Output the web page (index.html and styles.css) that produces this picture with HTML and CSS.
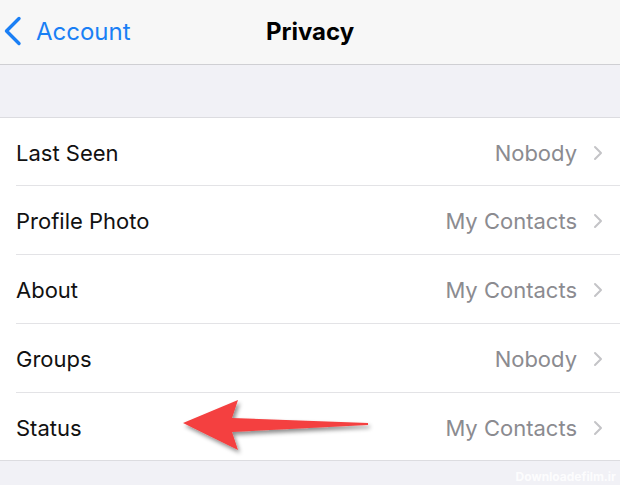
FILE: index.html
```html
<!DOCTYPE html>
<html>
<head>
<meta charset="utf-8">
<link rel="stylesheet" href="styles.css">
</head>
<body>
<div class="screen">
  <header class="nav">
    <div class="back">
      <svg class="back-icon" width="20" height="30" viewBox="0 0 20 30"><path d="M16 2.5 L3.5 15 L16 27.5" fill="none" stroke="#1a7ff5" stroke-width="3.4" stroke-linecap="round" stroke-linejoin="round"/></svg>
      <span>Account</span>
    </div>
    <div class="title">Privacy</div>
  </header>
  <div class="band"></div>
  <ul class="list">
    <li class="row"><span class="label">Last Seen</span><span class="value">Nobody</span><svg class="chev" width="10" height="16" viewBox="0 0 10 16"><path d="M2 2 L8 8 L2 14" fill="none" stroke="#c4c4c7" stroke-width="2" stroke-linecap="round" stroke-linejoin="round"/></svg></li>
    <li class="row"><span class="label">Profile Photo</span><span class="value">My Contacts</span><svg class="chev" width="10" height="16" viewBox="0 0 10 16"><path d="M2 2 L8 8 L2 14" fill="none" stroke="#c4c4c7" stroke-width="2" stroke-linecap="round" stroke-linejoin="round"/></svg></li>
    <li class="row"><span class="label">About</span><span class="value">My Contacts</span><svg class="chev" width="10" height="16" viewBox="0 0 10 16"><path d="M2 2 L8 8 L2 14" fill="none" stroke="#c4c4c7" stroke-width="2" stroke-linecap="round" stroke-linejoin="round"/></svg></li>
    <li class="row"><span class="label">Groups</span><span class="value">Nobody</span><svg class="chev" width="10" height="16" viewBox="0 0 10 16"><path d="M2 2 L8 8 L2 14" fill="none" stroke="#c4c4c7" stroke-width="2" stroke-linecap="round" stroke-linejoin="round"/></svg></li>
    <li class="row"><span class="label">Status</span><span class="value">My Contacts</span><svg class="chev" width="10" height="16" viewBox="0 0 10 16"><path d="M2 2 L8 8 L2 14" fill="none" stroke="#c4c4c7" stroke-width="2" stroke-linecap="round" stroke-linejoin="round"/></svg></li>
  </ul>
  <svg class="arrow" width="200" height="60" viewBox="0 0 200 60">
    <defs>
      <filter id="sh" x="-10%" y="-30%" width="130%" height="180%">
        <feDropShadow dx="2" dy="3" stdDeviation="2" flood-color="#000" flood-opacity="0.45"/>
      </filter>
    </defs>
    <path d="M3 23 L58 0 L52 18 L188 23 L188 25 L52 32 L58 50 Z" fill="#f43f3f" filter="url(#sh)"/>
  </svg>
  <div class="watermark">Downloadefilm.ir</div>
</div>
</body>
</html>
```
FILE: styles.css
```css
* { box-sizing: border-box; }
html, body { margin: 0; padding: 0; }
body {
  width: 620px;
  height: 485px;
  overflow: hidden;
  background: #f1f1f6;
  font-family: "Inter", "Liberation Sans", sans-serif;
}
.screen {
  position: relative;
  width: 620px;
  height: 485px;
  background: #f1f1f6;
}
.nav {
  position: relative;
  height: 65px;
  background: #f7f7f7;
  border-bottom: 1px solid #cfcfd3;
  display: flex;
  align-items: center;
}
.back {
  display: flex;
  align-items: center;
  gap: 13px;
  padding-left: 3px;
  color: #1a7ff5;
  font-size: 24px;
  padding-bottom: 2px;
}
.back-icon { display: block; }
.title {
  position: absolute;
  left: 0;
  right: 0;
  top: 0;
  height: 64px;
  display: flex;
  align-items: center;
  justify-content: center;
  font-weight: 700;
  font-size: 24px;
  color: #000;
  padding-bottom: 2px;
}
.band { height: 52px; }
.list {
  list-style: none;
  margin: 0;
  padding: 0 0 0 16px;
  background: #fff;
  border-top: 1px solid #dcdce0;
  border-bottom: 1px solid #dcdce0;
}
.row {
  height: 69px;
  display: flex;
  align-items: center;
  padding-right: 17px;
  padding-top: 2px;
  border-bottom: 1px solid #e3e3e6;
  font-size: 22px;
}
.row:first-child { height: 68px; }
.row:last-child { border-bottom: none; height: 67px; }
.label { color: #111; flex: 1; }
.value { color: #8b8b90; margin-right: 16px; }
.chev { display: block; }
.arrow {
  position: absolute;
  left: 180px;
  top: 400px;
}
.watermark {
  position: absolute;
  right: 4px;
  bottom: 1px;
  font-size: 12px;
  font-weight: 700;
  color: rgba(255,255,255,0.85);
}
```
